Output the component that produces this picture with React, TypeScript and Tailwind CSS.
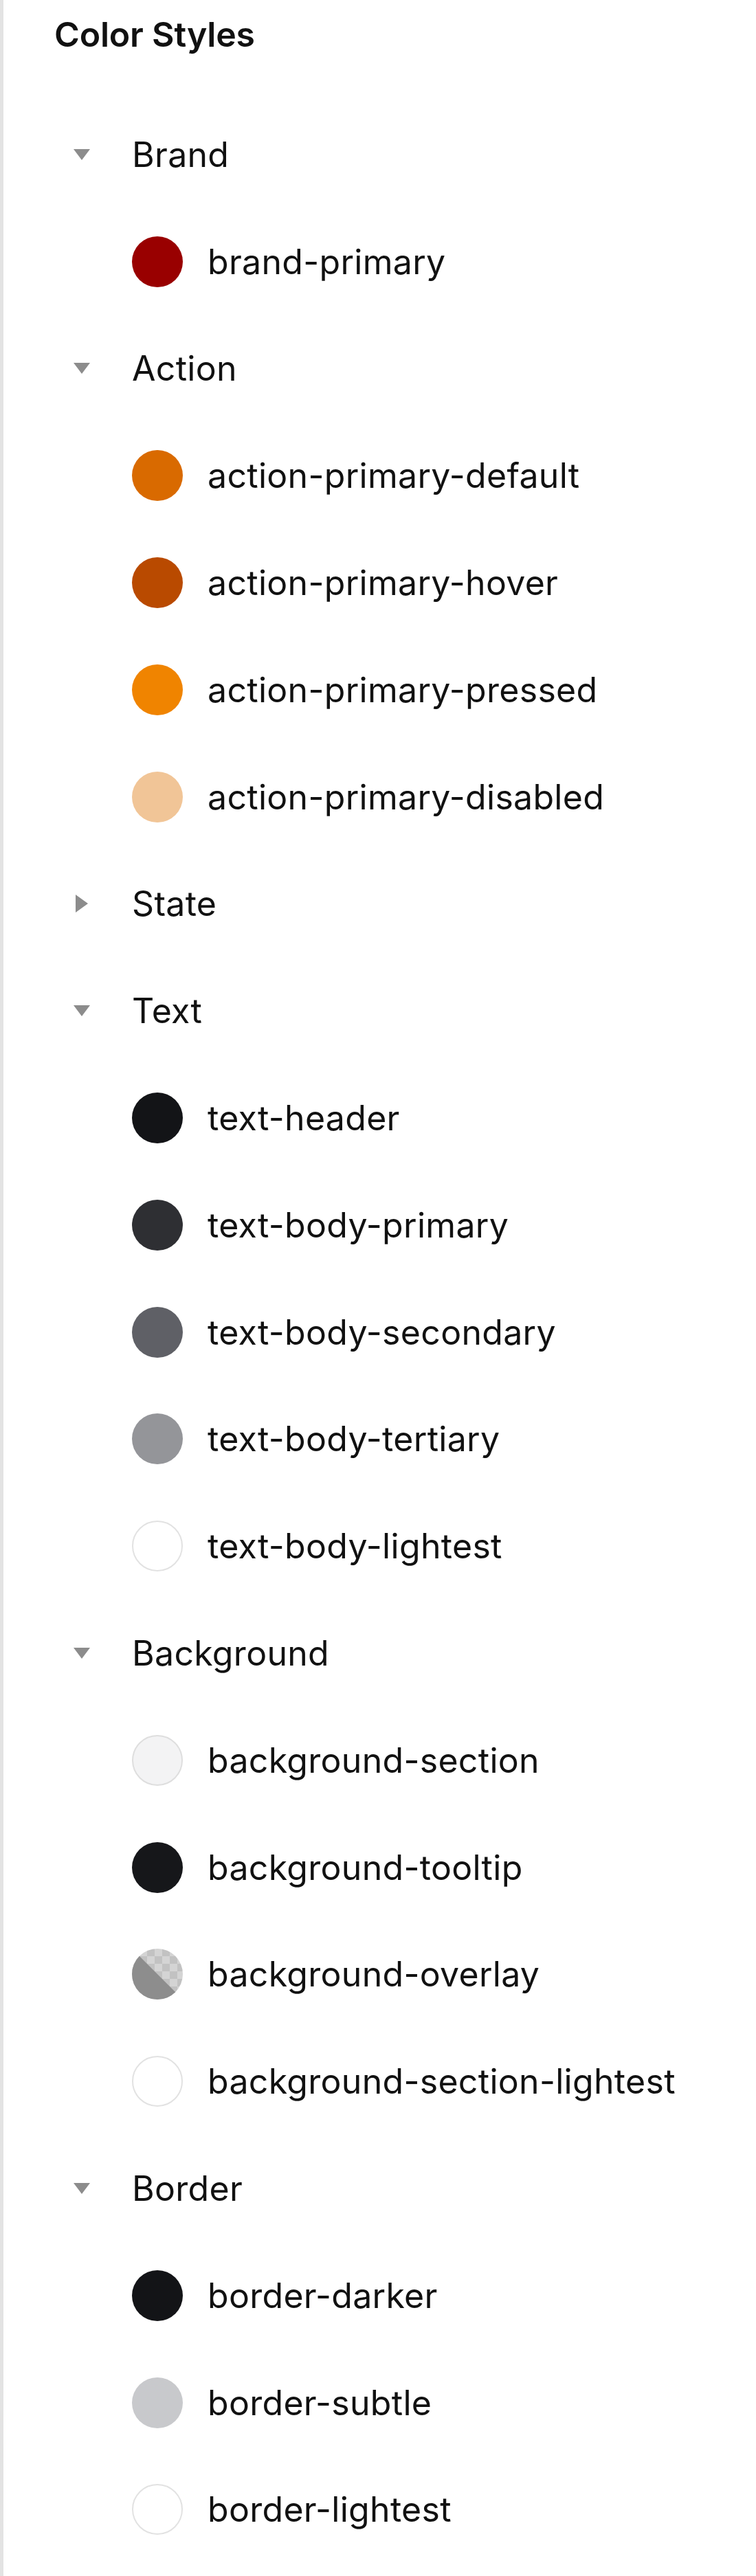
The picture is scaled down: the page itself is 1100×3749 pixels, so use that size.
import React from "react";

type Item = { kind: "group"; label: string; open: boolean } | { kind: "color"; label: string; swatch: string };

const rows: Item[] = [
  { kind: "group", label: "Brand", open: true },
  { kind: "color", label: "brand-primary", swatch: "bg-[#990000]" },
  { kind: "group", label: "Action", open: true },
  { kind: "color", label: "action-primary-default", swatch: "bg-[#d96a00]" },
  { kind: "color", label: "action-primary-hover", swatch: "bg-[#b94a00]" },
  { kind: "color", label: "action-primary-pressed", swatch: "bg-[#f08400]" },
  { kind: "color", label: "action-primary-disabled", swatch: "bg-[#f1c597]" },
  { kind: "group", label: "State", open: false },
  { kind: "group", label: "Text", open: true },
  { kind: "color", label: "text-header", swatch: "bg-[#131417]" },
  { kind: "color", label: "text-body-primary", swatch: "bg-[#2e2f33]" },
  { kind: "color", label: "text-body-secondary", swatch: "bg-[#5f6066]" },
  { kind: "color", label: "text-body-tertiary", swatch: "bg-[#949599]" },
  { kind: "color", label: "text-body-lightest", swatch: "bg-white border-2 border-[#e2e2e2]" },
  { kind: "group", label: "Background", open: true },
  { kind: "color", label: "background-section", swatch: "bg-[#f3f3f4] border-2 border-[#dedede]" },
  { kind: "color", label: "background-tooltip", swatch: "bg-[#16171a]" },
  { kind: "color", label: "background-overlay", swatch: "overlay" },
  { kind: "color", label: "background-section-lightest", swatch: "bg-white border-2 border-[#e2e2e2]" },
  { kind: "group", label: "Border", open: true },
  { kind: "color", label: "border-darker", swatch: "bg-[#131417]" },
  { kind: "color", label: "border-subtle", swatch: "bg-[#c8c9cc]" },
  { kind: "color", label: "border-lightest", swatch: "bg-white border-2 border-[#e2e2e2]" },
];

const Caret = ({ open }: { open: boolean }) =>
  open ? (
    <svg width="28" height="18" viewBox="0 0 28 18">
      <path d="M2 1 L26 1 L14 17 Z" fill="#8c8c8c" />
    </svg>
  ) : (
    <svg width="28" height="26" viewBox="0 0 28 26">
      <path d="M5 0 L23 13 L5 26 Z" fill="#8c8c8c" />
    </svg>
  );

const OverlaySwatch = () => {
  const cells = [];
  for (let r = 0; r < 7; r++) {
    for (let c = 0; c < 7; c++) {
      cells.push(
        <rect
          key={`${r}-${c}`}
          x={c * 11}
          y={r * 11}
          width="11"
          height="11"
          fill={(r + c) % 2 === 0 ? "#c2c2c2" : "#d4d4d4"}
        />,
      );
    }
  }
  return (
    <svg width="74" height="74" viewBox="0 0 74 74">
      <defs>
        <clipPath id="ov">
          <circle cx="37" cy="37" r="37" />
        </clipPath>
      </defs>
      <g clipPath="url(#ov)">
        {cells}
        <path d="M0 0 L74 74 L0 74 Z" fill="#8d8d8d" />
      </g>
    </svg>
  );
};

export default function App() {
  return (
    <div
      className="min-h-[3749px] w-[1100px] border-l-[5px] border-[#e3e3e3] bg-white text-[#111111]"
      style={{ fontFamily: "Inter, 'Noto Sans', sans-serif" }}
    >
      <div className="h-[147px] pl-[74px] pt-[25px]">
        <div className="text-[50px] font-semibold leading-[50px] tracking-[-0.2px]">Color Styles</div>
      </div>
      <div className="flex flex-col">
        {rows.map((row) =>
          row.kind === "group" ? (
            <div key={row.label} className="flex h-[155.8px] items-center">
              <div className="ml-[100px] flex w-[28px] justify-center">
                <Caret open={row.open} />
              </div>
              <span className="ml-[59px] text-[50px] leading-[50px] tracking-[0.3px]">{row.label}</span>
            </div>
          ) : (
            <div key={row.label} className="flex h-[155.8px] items-center">
              <div className="ml-[187px] h-[74px] w-[74px] shrink-0">
                {row.swatch === "overlay" ? (
                  <OverlaySwatch />
                ) : (
                  <div className={`h-[74px] w-[74px] rounded-full ${row.swatch}`} />
                )}
              </div>
              <span className="ml-[36px] text-[50px] leading-[50px] tracking-[0.3px]">{row.label}</span>
            </div>
          ),
        )}
      </div>
    </div>
  );
}
